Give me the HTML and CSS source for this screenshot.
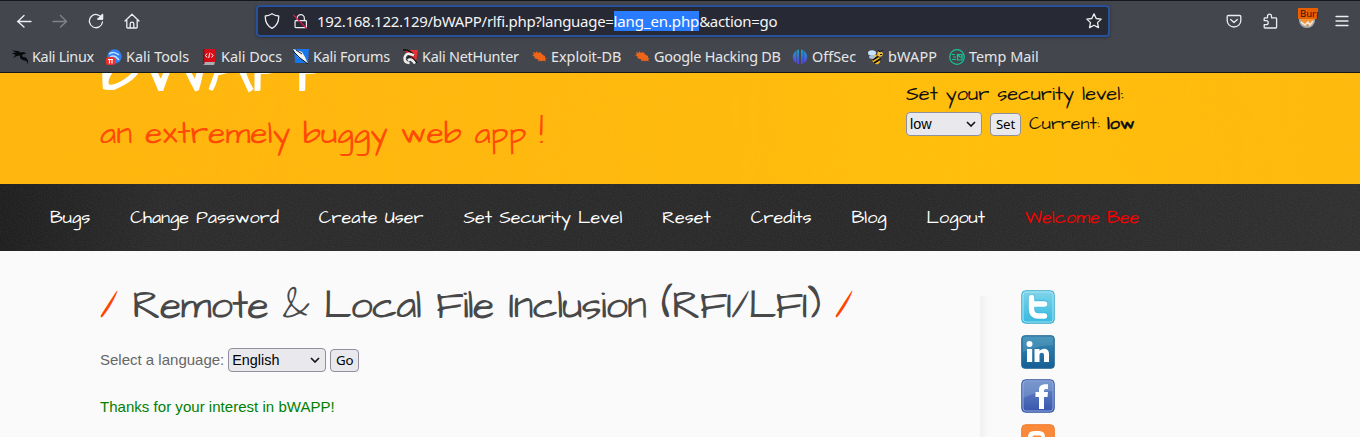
FILE: index.html
```html
<!DOCTYPE html>
<html lang="en">
<head>
<meta charset="utf-8">
<title>bWAPP - Remote &amp; Local File Inclusion</title>
<link rel="stylesheet" href="styles.css">
</head>
<body>
<header class="browser">
  <div class="toolbar">
    <div class="nav-buttons">
      <svg class="ico" viewBox="0 0 16 16"><path d="M15 8.500H1.500M8 2.500L1.800 8.500 8 14"/></svg>
      <svg class="ico dim" viewBox="0 0 16 16"><path d="M1 8.500h13.500M8.500 2.500l6 6-6 5.500"/></svg>
      <svg class="ico" viewBox="0 0 16 16"><path d="M13.800 5A6.600 6.600 0 1 0 14.500 9M14.500 1.500V6H10"/><path class="solid" d="M14.500 1.500V6H10z"/></svg>
      <svg class="ico" viewBox="0 0 16 16"><path d="M1 8L8 1.200 15 8M2.800 7v7.200q0 .8.800.8h8.800q.8 0 .8-.8V7M6.200 15v-4q0-1.800 1.800-1.800T9.800 11v4"/></svg>
    </div>
    <div class="urlbar">
      <svg class="ico" viewBox="0 0 16 16"><path d="M8 .8c2 1.500 4 2 6.700 2.200C15 9 12.500 13 8 15.300 3.500 13 1 9 1.300 3 4 2.800 6 2.300 8 .8z"/></svg>
      <svg class="ico lock" viewBox="0 0 16 16"><path d="M4.500 7.500V5a3.800 3.800 0 0 1 7.600 0v2.500M3 7.700h10.500q.8 0 .8.800v5.700q0 .8-.8.800H3q-.8 0-.8-.8V8.500q0-.8.8-.8z"/><path class="strike" d="M.5 1.500L14 15.500"/></svg>
      <div class="url">192.168.122.129/bWAPP/rlfi.php?language=<span class="selected">lang_en.php</span>&amp;action=go</div>
      <svg class="ico star" viewBox="0 0 16 16"><path d="M8 .9l2.200 4.600 5 .6-3.700 3.500 1 5L8 12.200l-4.500 2.400 1-5L.8 6.100l5-.6z"/></svg>
    </div>
    <div class="actions">
      <svg class="ico" viewBox="0 0 16 16"><path d="M2.200 2.500h11.600q1 0 1 1V7.500a6.800 6.500 0 0 1-13.600 0v-4q0-1 1-1zM4.700 6.500L8 9.500l3.300-3"/></svg>
      <svg class="ico" viewBox="0 0 16 16"><path d="M5.500 4.800V3.200a2 2 0 0 1 4 0v1.600h4.300q.8 0 .8.800v8.600q0 .8-.8.800H3q-.8 0-.8-.8v-2.500h2a2 2 0 0 0 0-4h-2V5.600q0-.8.8-.8z"/></svg>
      <div class="burp">
        <svg viewBox="0 0 20 18"><circle cx="9" cy="9" r="8" fill="#aaa9a8"/><circle cx="9" cy="8" r="6.500" fill="#f19334"/><path d="M3 11l4 3 3-3 2 3 3-4" stroke="#f5e5d5" stroke-width="1.600" fill="none"/></svg>
        <span class="burp-badge">Burp</span>
      </div>
      <svg class="ico" viewBox="0 0 16 16"><path d="M2 3.500h12M2 8h12M2 12.500h12"/></svg>
    </div>
  </div>
  <nav class="bookmarks">
    <a class="bm"><svg viewBox="0 0 16 16"><path d="M0 1.500L6 2l3 1.500L12 3l2 1.500-4 1.300.5 2 3.500.7 2 3v4l-1.500-3.500-4-1-2.500-2L8 6.500 5 7l-4 2 2.500-3L0 4l4-.5z" fill="#090a0b"/></svg><span class="tight">Kali Linux</span></a>
    <a class="bm"><svg viewBox="0 0 16 16"><circle cx="8.500" cy="7.500" r="7.200" fill="#2e7ff2"/><path d="M3 5c4-2 6-2 10 1M4 8c3-2 6-1 9 3" stroke="#c6e0ff" stroke-width="1.500" fill="none"/><rect y="8" width="9" height="8" rx="2.500" fill="#ee302c"/><path d="M2 10.500h5M3.500 10.500v4M6 10.500v4" stroke="#fff" stroke-width="1.100"/></svg><span>Kali Tools</span></a>
    <a class="bm"><svg viewBox="0 0 16 16"><path d="M2 0h12v13H2z" fill="#d70c16"/><path d="M2 13h12l-1 3H4q-2 0-2-2z" fill="#a7adb0"/><path d="M2 0h1.500v15H2z" fill="#920a12"/><path d="M6 4.500L4.500 6.500 6 8.500M10.500 4.500L12 6.500l-1.500 2M8.800 3.800L7.700 9" stroke="#fff" fill="none"/></svg><span>Kali Docs</span></a>
    <a class="bm"><svg viewBox="0 0 16 16"><path d="M1 0h15l-1 14H2z" fill="#1976e8"/><path d="M0 0l9 3 3 5 3 7-5-4-5-3z" fill="#f2f4f5"/><path d="M0 2l7 7 8 6M3 1l6 4" stroke="#111722" fill="none"/></svg><span class="snug">Kali Forums</span></a>
    <a class="bm"><svg viewBox="0 0 16 16"><path d="M2 1h14l-2 12z" fill="#e92e36"/><path d="M1 1q7-1 11 6" stroke="#111" stroke-width="1.500" fill="none"/><path d="M13 14.500q-4-6-7-3M12 6.500Q4 2 2.500 9q0 5 5 5" stroke="#eee" stroke-width="2.500" fill="none"/><path d="M5 9q4-3 7 1l3 4" stroke="#15171a" stroke-width="1.200" fill="none"/></svg><span class="snug">Kali NetHunter</span></a>
    <a class="bm"><svg viewBox="0 0 16 16"><path d="M2 3l3 1V2l2 2 2-1 3 3 2 1v2l2 .5-2 1 1 2-3-1-1 1-2-1-2 1 .5-2L3 9l1-1-3-2 2-.5z" fill="#ee6418"/></svg><span>Exploit-DB</span></a>
    <a class="bm"><svg viewBox="0 0 16 16"><path d="M2 3l3 1V2l2 2 2-1 3 3 2 1v2l2 .5-2 1 1 2-3-1-1 1-2-1-2 1 .5-2L3 9l1-1-3-2 2-.5z" fill="#ee6418"/></svg><span class="snug">Google Hacking DB</span></a>
    <a class="bm"><svg viewBox="0 0 16 16"><defs><linearGradient id="off" x2="0" y2="1"><stop stop-color="#18a1c8"/><stop offset="1" stop-color="#5b39df"/></linearGradient></defs><path d="M4 2v12Q.8 12 .8 8T4 2zM4.500 1.500L7 .5v15L4.500 14zM9 .5l2.500 1V14L9 15.500zM12 2q3.200 2 3.200 6T12 14z" fill="url(#off)"/></svg><span>OffSec</span></a>
    <a class="bm"><svg viewBox="0 0 16 16"><ellipse cx="8" cy="10.500" rx="5" ry="3.800" transform="rotate(55 8 10.500)" fill="#f2b727"/><path d="M4.500 11l6.500-4M6 14l6.500-4" stroke="#111" stroke-width="1.800"/><ellipse cx="4" cy="4" rx="4" ry="2.700" fill="#c9e3fb"/><ellipse cx="4" cy="8" rx="3" ry="1.800" fill="#a6c4e1"/><circle cx="12" cy="5" r="2.800" fill="#eebc3c"/><path d="M10 1l2 2 3-2M12 5.500h2" stroke="#111" fill="none"/></svg><span class="wide">bWAPP</span></a>
    <a class="bm"><svg viewBox="0 0 16 16"><g stroke="#14c797" stroke-width="1.200" fill="none"><circle cx="8" cy="8" r="7.300"/><path d="M3 5.500h3M4 8h3M3 10.500h4M8.500 5.500h4.500v5.500H8.500zM8.500 5.500l2.500 2.500h2"/></g></svg><span>Temp Mail</span></a>
  </nav>
</header>

<section class="banner">
  <div class="brand">
    <div class="logo">bWAPP</div>
    <div class="tagline">an extremely buggy web app !</div>
  </div>
  <form class="level">
    <div class="note">Set your security level:</div>
    <div class="level-row">
      <span class="select level-select">low<svg viewBox="0 0 10 6"><path d="M1 1l4 4 4-4"/></svg></span>
      <span class="button set">Set</span>
      <div class="note current">Current: <b>low</b></div>
    </div>
  </form>
</section>

<nav class="menu">
  <a>Bugs</a>
  <a>Change Password</a>
  <a>Create User</a>
  <a>Set Security Level</a>
  <a>Reset</a>
  <a>Credits</a>
  <a>Blog</a>
  <a>Logout</a>
  <a class="user">Welcome Bee</a>
</nav>

<div class="page">
  <main class="content">
    <h1><span class="slash">/</span> Remote &amp; Local File Inclusion (RFI/LFI) <span class="slash">/</span></h1>
    <form class="language">
      <label>Select a language:</label>
      <span class="select lang-select">English<svg viewBox="0 0 10 6"><path d="M1 1l4 4 4-4"/></svg></span>
      <span class="button go">Go</span>
    </form>
    <p class="thanks">Thanks for your interest in bWAPP!</p>
  </main>
  <aside class="social">
    <svg viewBox="0 0 34 34"><defs><linearGradient id="tw" x2="0" y2="1"><stop stop-color="#80d4ea"/><stop offset="1" stop-color="#35b9df"/></linearGradient><linearGradient id="li" x2="0" y2="1"><stop stop-color="#3b8bb6"/><stop offset="1" stop-color="#155e95"/></linearGradient><linearGradient id="fb" x2="0" y2="1"><stop stop-color="#6d8dc7"/><stop offset="1" stop-color="#3754ad"/></linearGradient></defs>
      <rect x=".7" y=".7" width="32.600" height="32.600" rx="4" fill="url(#tw)" stroke="#48afd0"/><rect x="2" y="2" width="30" height="30" rx="3" fill="none" stroke="#a5e4f3"/><path d="M10.500 8v11q0 7 7 7h6M12 13.500h11" fill="none" stroke="#2fb1dc" stroke-width="7.500" stroke-linecap="round" opacity=".5"/><path d="M10.500 7.500v11.500q0 7 7 7h6M12 14h11.500" fill="none" stroke="#fff" stroke-width="5.500" stroke-linecap="round"/></svg>
    <svg viewBox="0 0 34 34"><rect x=".7" y=".7" width="32.600" height="32.600" rx="3" fill="url(#li)" stroke="#2a6b94"/><path d="M2 2h30v8Q18 10 2 17z" fill="#69abc9" opacity=".35"/><circle cx="8.500" cy="9" r="3" fill="#fff"/><path d="M6 14h5.200v13H6zM13.500 14h5v2c2-3 9.500-4 9.500 3v8h-5v-7c0-3-4.500-3-4.500 0v7h-5z" fill="#fff"/></svg>
    <svg viewBox="0 0 34 34"><rect x=".7" y=".7" width="32.600" height="32.600" rx="4" fill="url(#fb)" stroke="#4462a5"/><rect x="2" y="2" width="30" height="30" rx="3" fill="none" stroke="#91a9dd"/><path d="M2 3h30v9Q18 11 2 19z" fill="#8eaad7" opacity=".4"/><path d="M18 30V18h-3.500v-5H18v-2c0-4.500 3-6 9-5.700v4.800c-3-.2-4 0-4 2V13h4l-.5 5H23v12z" fill="#fff"/></svg>
    <svg viewBox="0 0 34 34"><rect x=".7" y=".7" width="32.600" height="32.600" rx="4" fill="#fb893a" stroke="#f27c2b"/><path d="M7 26V13q0-6 6-6h5q6 0 6 6 0 2 3 2v7q0 5-5 5H7z" fill="#fff"/><path d="M13 13h6" stroke="#fb893a" stroke-width="3" stroke-linecap="round"/></svg>
  </aside>
</div>
</body>
</html>
```
FILE: styles.css
```css
* { box-sizing: border-box; }
body {
  margin: 0;
  height: 437px;
  overflow: hidden;
  background: #fafafa;
  font-family: "Liberation Sans", Arial, sans-serif;
  display: flex;
  flex-direction: column;
}
svg { display: block; flex: none; }
.banner .brand, .note, .menu, h1 { font-family: "Architects Daughter", Lato, sans-serif; white-space: nowrap; }

/* Browser chrome */
.browser {
  position: relative;
  flex: none;
  height: 73px;
  background: #43464d;
  border-top: 1px solid #16171b;
  border-bottom: 1px solid #16171b;
  color: #e6e6e8;
  font-family: "Noto Sans", sans-serif;
}
.toolbar { display: flex; height: 41px; padding-top: 4px; }
.ico { width: 16px; height: 16px; fill: none; stroke: #ededf0; stroke-width: 1.3; stroke-linejoin: round; stroke-linecap: round; }
.ico .solid { fill: #ededf0; }
.dim { stroke: #83858b; }
.nav-buttons { display: flex; gap: 20px; width: 256px; padding: 8px 0 0 16px; }
.urlbar {
  display: flex;
  align-items: center;
  width: 854px;
  height: 32px;
  border: 2px solid #27529b;
  border-radius: 4px;
  background: #272934;
  padding: 0 6px;
  box-shadow: 0 1px 3px #303238;
}
.lock { margin-left: 13px; width: 15px; }
.lock .strike { stroke: #e4174e; }
.url { margin-left: 9px; font-size: 15px; line-height: 20px; letter-spacing: -.3px; white-space: nowrap; color: #f4f4f6; }
.selected { background: #2a7cff; color: #fff; letter-spacing: -.12px; }
.star { margin-left: auto; }
.actions { display: flex; padding: 8px 0 0 116px; gap: 20px; }
.burp { position: relative; width: 20px; height: 24px; margin: -5px -4px 0 0; }
.burp svg { width: 20px; height: 18px; margin-top: 3px; }
.burp-badge {
  position: absolute;
  left: 0;
  top: 0;
  width: 20px;
  height: 11px;
  overflow: hidden;
  padding-left: 2px;
  background: #e85f00;
  color: #30180b;
  font-size: 9.500px;
  line-height: 11px;
}
.bookmarks {
  display: grid;
  grid-template-columns: 94px 95px 92px 109px 129px 103px 158px 76px 81px 100px;
  padding: 5px 0 0 12px;
  font-size: 14.400px;
  line-height: 20px;
}
.bm { display: flex; align-items: center; gap: 4px; white-space: nowrap; }
.bm svg { width: 16px; height: 16px; }
.tight { letter-spacing: -.3px; }
.snug { letter-spacing: -.24px; }
.wide { letter-spacing: .2px; }

/* Banner */
.banner {
  flex: none;
  display: flex;
  height: 111px;
  padding-left: 100px;
  overflow: hidden;
  background:
    url("data:image/svg+xml,%3Csvg xmlns='http://www.w3.org/2000/svg' width='600' height='111'%3E%3Cfilter id='g'%3E%3CfeTurbulence type='fractalNoise' baseFrequency='.12 .008' numOctaves='3' stitchTiles='stitch'/%3E%3CfeColorMatrix values='0 0 0 0 1 0 0 0 0 .5 0 0 0 0 0 2 0 0 0 -.6'/%3E%3C/filter%3E%3Crect width='600' height='111' filter='url(%23g)' opacity='.12'/%3E%3C/svg%3E"),
    linear-gradient(90deg, #ffb60f, #ffb80f 40%, #ffbe0d 70%, #ffba0f);
}
.brand { width: 806px; }
.logo { height: 90px; margin-top: -49px; font-size: 75px; line-height: 90px; letter-spacing: -3px; color: #fff; }
.tagline { height: 50px; margin-top: -5px; font-size: 32px; line-height: 50px; color: #ff4a03; }
.level { padding-top: 6px; }
.level-row { display: flex; align-items: center; height: 24px; margin-top: 3px; }
.note { font-size: 20px; line-height: 30px; color: #111; }
.current { margin-left: 8px; font-size: 18px; }
.select, .button {
  display: flex;
  align-items: center;
  border: 1px solid #8f8f9d;
  border-radius: 4px;
  background: #e9e9ed;
  color: #000;
}
.select { height: 24px; padding: 0 5px 0 3px; justify-content: space-between; font-size: 14.400px; }
.select svg { width: 10px; height: 6px; fill: none; stroke: #111; stroke-width: 1.6; }
.button { height: 23px; justify-content: center; font: 13.300px "Noto Sans", sans-serif; letter-spacing: -.2px; }
.level-select { width: 76px; }
.set { width: 31px; margin-left: 8px; }

/* Main menu */
.menu {
  flex: none;
  display: flex;
  gap: 40px;
  height: 67px;
  padding-left: 50px;
  font-size: 18px;
  line-height: 67px;
  color: #fff;
  background:
    url("data:image/svg+xml,%3Csvg xmlns='http://www.w3.org/2000/svg' width='200' height='67'%3E%3Cfilter id='n'%3E%3CfeTurbulence type='fractalNoise' baseFrequency='.8' numOctaves='2' stitchTiles='stitch'/%3E%3CfeColorMatrix type='saturate' values='0'/%3E%3C/filter%3E%3Crect width='200' height='67' filter='url(%23n)' opacity='.12'/%3E%3C/svg%3E"),
    linear-gradient(90deg, #181818, #262626 12%, #232323 65%, #2a2a2a);
}
.menu .user { color: #f60000; }

/* Page */
.page { display: flex; flex: 1; min-height: 0; background: #fafafa; }
.content { width: 980px; padding: 31px 0 0 100px; }
h1 { margin: 0; height: 50px; font-size: 40px; font-weight: 400; line-height: 50px; letter-spacing: -1px; color: #484848; }
h1 .slash { color: #ff4500; }
.language { display: flex; align-items: center; height: 24px; margin-top: 16px; font-size: 15px; color: #666; }
.language label { padding-bottom: 2px; }
.lang-select { width: 98px; margin-left: 4px; }
.go { width: 29px; margin-left: 4px; }
.thanks { margin: 26px 0 0; font-size: 15px; line-height: 18px; letter-spacing: .03px; color: #008000; }
.social {
  display: flex;
  flex-direction: column;
  gap: 10.500px;
  flex: 1;
  padding: 39px 0 0 41px;
  background: linear-gradient(90deg, #f0f0f0, #fafafa) 0 45px / 9px 100% no-repeat;
}
.social svg { width: 34px; height: 34px; }
```
